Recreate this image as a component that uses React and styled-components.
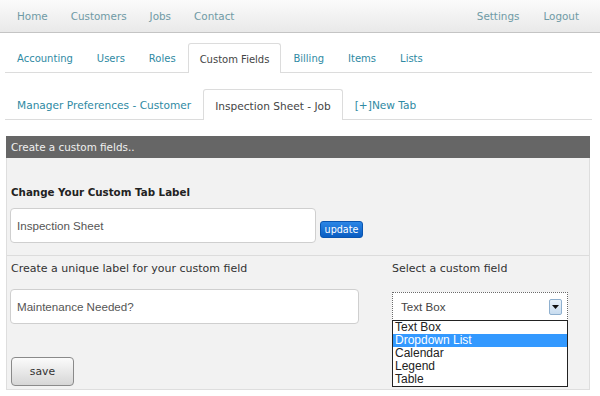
import React from "react";
import styled, { createGlobalStyle } from "styled-components";

const Global = createGlobalStyle`
  html, body { margin: 0; padding: 0; background: #fff; }
  body { font-family: "DejaVu Sans", Verdana, sans-serif; }
  * { box-sizing: border-box; }
`;

const Page = styled.div`
  width: 600px;
  height: 396px;
  overflow: hidden;
  background: #fff;
`;

const TopNav = styled.nav`
  height: 33px;
  display: flex;
  align-items: center;
  justify-content: space-between;
  padding: 0 21px 1px 17px;
  background: linear-gradient(#fbfbfb, #e9e9e9);
  border-bottom: 1px solid #c4c4c4;
`;

const NavGroup = styled.div`
  display: flex;
  gap: ${(p) => p.$gap}px;
`;

const NavLink = styled.a`
  font-size: 10.4px;
  color: #6f9aa5;
  text-decoration: none;
`;

const TabBar = styled.div`
  display: flex;
  margin: ${(p) => p.$top}px 8px 0 5px;
  border-bottom: 1px solid #dcdcdc;
  height: ${(p) => p.$h}px;
`;

const Tab = styled.a`
  display: flex;
  align-items: center;
  padding: 1px ${(p) => p.$px}px 0;
  font-size: ${(p) => p.$fs}px;
  color: ${(p) => (p.$active ? "#444" : "#2f8aa3")};
  text-decoration: none;
  white-space: nowrap;
  border: 1px solid ${(p) => (p.$active ? "#dcdcdc" : "transparent")};
  border-bottom: none;
  border-radius: 3px 3px 0 0;
  background: ${(p) => (p.$active ? "#fff" : "transparent")};
  margin-bottom: ${(p) => (p.$active ? "-1px" : "0")};
`;

const Panel = styled.section`
  margin: 16px 10px 0 6px;
  position: relative;
`;

const PanelHead = styled.div`
  height: 22px;
  background: #666;
  color: #f0f0f0;
  font-size: 10.4px;
  display: flex;
  align-items: center;
  padding-left: 5px;
`;

const PanelBody = styled.div`
  background: #f2f2f2;
  border: 1px solid #dedede;
  border-top: none;
  height: 232px;
`;

const Section = styled.div`
  padding: ${(p) => p.$pad};
  border-bottom: ${(p) => (p.$sep ? "1px solid #dcdcdc" : "none")};
`;

const BoldLabel = styled.div`
  font-weight: bold;
  font-size: 10.3px;
  color: #222;
  padding-left: 1px;
  margin-bottom: 10px;
`;

const Row = styled.div`
  display: flex;
  align-items: flex-end;
  gap: 4px;
`;

const TextInput = styled.div`
  width: ${(p) => p.$w}px;
  height: 35px;
  background: #fff;
  border: 1px solid #cfcfcf;
  border-radius: 4px;
  display: flex;
  align-items: center;
  padding-left: 6px;
  font-family: "Liberation Sans", Arial, sans-serif;
  font-size: 11.6px;
  color: #555;
`;

const UpdateButton = styled.button`
  height: 17px;
  width: 43px;
  margin-bottom: 5px;
  padding: 0;
  border: 1px solid #0a55b0;
  border-radius: 3px;
  background: linear-gradient(#2b86e6, #0a5dc2);
  color: #fff;
  font-family: "DejaVu Sans", Verdana, sans-serif;
  font-size: 9.6px;
`;

const Columns = styled.div`
  display: flex;
  gap: 33px;
`;

const Col = styled.div`
  display: flex;
  flex-direction: column;
`;

const PlainLabel = styled.div`
  font-size: 11px;
  color: #333;
  padding-left: ${(p) => p.$pl}px;
  margin-bottom: ${(p) => p.$mb}px;
  height: 14px;
  white-space: nowrap;
`;

const SelectWrap = styled.div`
  position: relative;
  width: 176px;
`;

const SelectBox = styled.div`
  height: 29px;
  border: 1px dotted #6a6a6a;
  background: #fff;
  display: flex;
  align-items: center;
  justify-content: space-between;
  padding: 0 5px 0 8px;
  font-family: "Liberation Sans", Arial, sans-serif;
  font-size: 11.6px;
  color: #444;
`;

const ArrowBtn = styled.div`
  width: 13px;
  height: 16px;
  border: 1px solid #8fb0cf;
  border-radius: 2px;
  background: linear-gradient(#eaf3fb, #c8dcef);
  display: flex;
  align-items: center;
  justify-content: center;
`;

const DropList = styled.ul`
  position: absolute;
  left: 0;
  top: 28px;
  width: 176px;
  margin: 0;
  padding: 0;
  list-style: none;
  background: #fff;
  border: 1px solid #222;
  font-family: "Liberation Sans", Arial, sans-serif;
  font-size: 12px;
  z-index: 2;
`;

const DropItem = styled.li`
  height: 13px;
  line-height: 13px;
  padding-left: 2px;
  color: ${(p) => (p.$sel ? "#fff" : "#222")};
  background: ${(p) => (p.$sel ? "#3399ff" : "transparent")};
`;

const SaveRow = styled.div`
  display: flex;
  margin-top: 33px;
`;

const SaveButton = styled.button`
  width: 63px;
  height: 29px;
  margin-left: 1px;
  border: 1px solid #8a8a8a;
  border-radius: 4px;
  background: linear-gradient(#fbfbfb, #d6d6d6);
  font-family: "DejaVu Sans", Verdana, sans-serif;
  font-size: 10.8px;
  color: #333;
  padding: 0;
`;

export default function App() {
  const options = ["Text Box", "Dropdown List", "Calendar", "Legend", "Table"];
  const mainTabs = ["Accounting", "Users", "Roles", "Custom Fields", "Billing", "Items", "Lists"];
  const subTabs = ["Manager Preferences - Customer", "Inspection Sheet - Job", "[+]New Tab"];
  return (
    <Page>
      <Global />
      <TopNav>
        <NavGroup $gap={23}>
          <NavLink>Home</NavLink>
          <NavLink>Customers</NavLink>
          <NavLink>Jobs</NavLink>
          <NavLink>Contact</NavLink>
        </NavGroup>
        <NavGroup $gap={24}>
          <NavLink>Settings</NavLink>
          <NavLink>Logout</NavLink>
        </NavGroup>
      </TopNav>

      <TabBar $top={10} $h={30}>
        {mainTabs.map((t) => (
          <Tab key={t} $fs={10} $px={11} $active={t === "Custom Fields"}>
            {t}
          </Tab>
        ))}
      </TabBar>

      <TabBar $top={16} $h={31}>
        {subTabs.map((t) => (
          <Tab key={t} $fs={10.6} $px={11} $active={t === "Inspection Sheet - Job"}>
            {t}
          </Tab>
        ))}
      </TabBar>

      <Panel>
        <PanelHead>Create a custom fields..</PanelHead>
        <PanelBody>
          <Section $sep $pad="28px 3px 12px">
            <BoldLabel>Change Your Custom Tab Label</BoldLabel>
            <Row>
              <TextInput $w={306}>Inspection Sheet</TextInput>
              <UpdateButton>update</UpdateButton>
            </Row>
          </Section>
          <Section $pad="6px 3px 0">
            <Columns>
              <Col>
                <PlainLabel $pl={1} $mb={13}>
                  Create a unique label for your custom field
                </PlainLabel>
                <TextInput $w={349}>Maintenance Needed?</TextInput>
              </Col>
              <Col>
                <PlainLabel $pl={0} $mb={16}>
                  Select a custom field
                </PlainLabel>
                <SelectWrap>
                  <SelectBox>
                    Text Box
                    <ArrowBtn>
                      <svg width="7" height="4" viewBox="0 0 7 4">
                        <path d="M0 0 H7 L3.5 4 Z" fill="#111" />
                      </svg>
                    </ArrowBtn>
                  </SelectBox>
                  <DropList>
                    {options.map((o) => (
                      <DropItem key={o} $sel={o === "Dropdown List"}>
                        {o}
                      </DropItem>
                    ))}
                  </DropList>
                </SelectWrap>
              </Col>
            </Columns>
            <SaveRow>
              <SaveButton>save</SaveButton>
            </SaveRow>
          </Section>
        </PanelBody>
      </Panel>
    </Page>
  );
}
